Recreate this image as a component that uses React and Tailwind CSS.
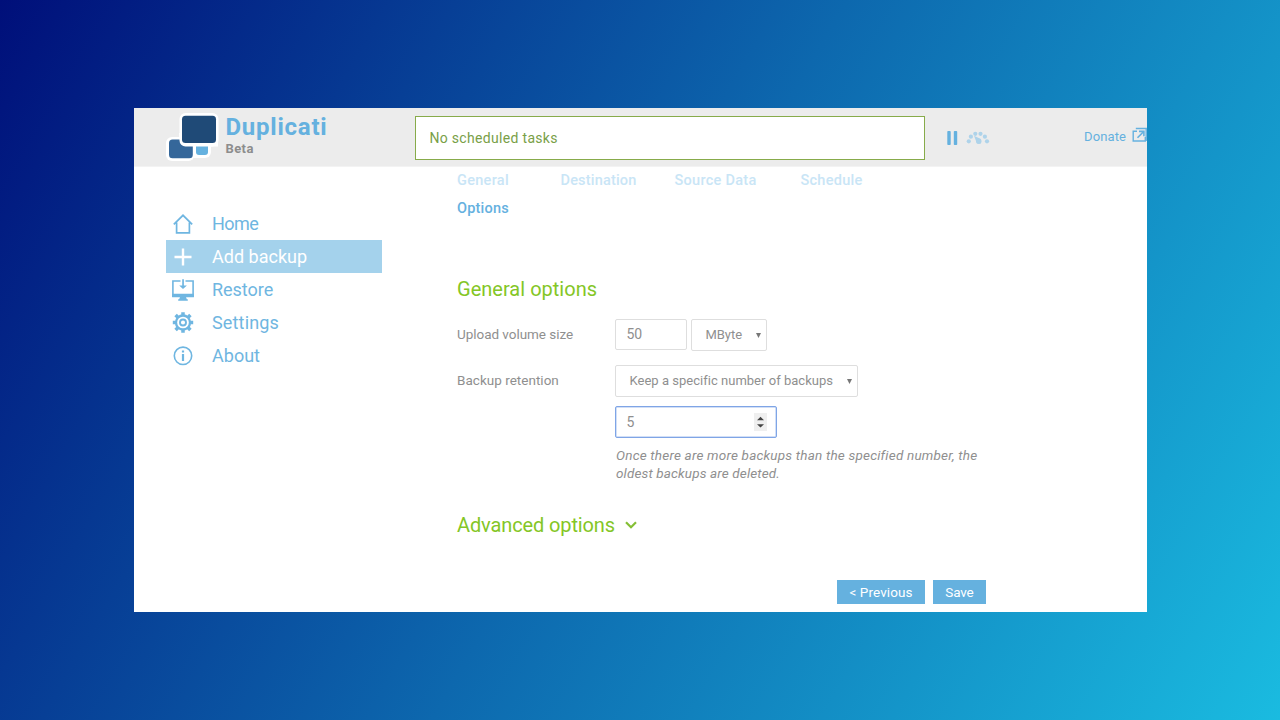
function Logo() {
  return (
    <svg className="h-[52px] w-[54px] shrink-0" viewBox="0 0 54 52">
      <rect x="22" y="24" width="23" height="25" rx="6" fill="#fff" />
      <rect x="0" y="28" width="28.5" height="24" rx="6" fill="#fff" />
      <rect x="13.5" y="4" width="39" height="33.5" rx="6" fill="#fff" />
      <rect x="30" y="34" width="12" height="12" rx="3" fill="#65b1df" />
      <path d="M22 28h8v21h-4z" fill="#fff" />
      <rect x="3" y="30.500" width="23.8" height="18.7" rx="3.5" fill="#35679a" />
      <path d="M13 24h39v13.5H19.5a6 6 0 0 1-6-6z" fill="#fff" />
      <rect x="16" y="6.800" width="34" height="27.200" rx="3.500" fill="#1f4a77" />
    </svg>
  );
}

function HomeIcon() {
  return (
    <svg className="size-[24px]" viewBox="0 0 24 24" fill="none" stroke="currentColor" strokeWidth="1.7">
      <path d="M2.800 12.300L12 3.300l9.200 9M5.600 10.500v10.300h12.800V10.500" />
    </svg>
  );
}

function PlusIcon() {
  return (
    <svg className="size-[24px]" viewBox="0 0 24 24" fill="none" stroke="currentColor" strokeWidth="2.400">
      <path d="M12 3.500v17M3.500 12h17" />
    </svg>
  );
}

function RestoreIcon() {
  return (
    <svg className="size-[24px]" viewBox="0 0 24 24">
      <path d="M9.500 3H1.900v15.500h20.200V3h-7.600" fill="none" stroke="currentColor" strokeWidth="1.600" />
      <path d="M1.100 15.800h21.800v3.300H1.100zM9 19h6l.8 2.200h1v1.600H7.200v-1.600h1z" fill="currentColor" />
      <path d="M11.200 1.200h1.700v6.200h3L12 11 8.200 7.400h3z" fill="currentColor" />
    </svg>
  );
}

function GearIcon() {
  return (
    <svg className="size-[24px]" viewBox="0 0 24 24" fill="none" stroke="currentColor">
      <circle cx="12" cy="11.500" r="7" strokeWidth="2.300" />
      <circle cx="12" cy="11.500" r="3" strokeWidth="1.900" />
      <path
        d="M12 1.300v3.400M12 18.300v3.400M1.800 11.500h3.400M18.800 11.500h3.400M4.600 4.100l2.500 2.500M16.900 16.400l2.500 2.500M4.600 18.900l2.500-2.500M16.900 6.600l2.500-2.500"
        strokeWidth="3.500"
      />
    </svg>
  );
}

function InfoIcon() {
  return (
    <svg className="size-[24px]" viewBox="0 0 24 24" fill="none" stroke="currentColor">
      <circle cx="12" cy="11.800" r="8.700" strokeWidth="1.600" />
      <path d="M12 10.100v7M12 6.600v2" strokeWidth="2.200" />
    </svg>
  );
}

function PauseIcon() {
  return (
    <svg className="h-[14px] w-[11px]" viewBox="0 0 11 14" fill="currentColor">
      <rect x="0.300" y="0" width="3.400" height="14" rx="0.800" />
      <rect x="6.800" y="0" width="3.400" height="14" rx="0.800" />
    </svg>
  );
}

function SpeedIcon() {
  return (
    <svg className="h-[14px] w-[24px]" viewBox="0 0 24 14" fill="currentColor">
      <circle cx="2.800" cy="10.300" r="2.100" />
      <circle cx="4.900" cy="5.700" r="2.100" />
      <circle cx="9.300" cy="2.800" r="2.100" />
      <circle cx="14.500" cy="2.800" r="2.100" />
      <circle cx="18.900" cy="5.700" r="2.100" />
      <circle cx="21" cy="10.300" r="2.100" />
      <path d="M8 4.800l6.800 3.200v4.500h-3.800z" />
      <circle cx="12.800" cy="10.300" r="2.700" />
    </svg>
  );
}

function ExternalIcon() {
  return (
    <svg className="h-[16px] w-[16px] shrink-0" viewBox="0 0 16 16" fill="none" stroke="currentColor" strokeWidth="1.400">
      <path d="M5 4.300H1.200v9.700h12.100V10M3.800 1.500h11.500M14.200 1v13" />
      <path d="M5.500 10.700l6-6M7 4.400h4.900v4.900" strokeWidth="1.600" />
    </svg>
  );
}

function Caret() {
  return (
    <svg className="h-[5px] w-[5px]" viewBox="0 0 5 5" fill="#777">
      <path d="M0 0h5L2.500 5z" />
    </svg>
  );
}

const nav = [
  { label: "Home", Icon: HomeIcon, tracking: "tracking-[-0.550px]" },
  { label: "Add backup", Icon: PlusIcon, tracking: "tracking-[0.020px]", active: true },
  { label: "Restore", Icon: RestoreIcon, tracking: "tracking-[-0.030px]" },
  { label: "Settings", Icon: GearIcon, tracking: "tracking-[0.160px]" },
  { label: "About", Icon: InfoIcon, tracking: "tracking-[0.020px]" },
];

export default function App() {
  return (
    <div className="flex h-[720px] w-[1280px] flex-col overflow-hidden bg-[linear-gradient(120deg,#000f7a_0%,#0d68ae_50%,#1abbe0_100%)] px-[134px] pt-[108px] font-['Roboto',sans-serif]">
      <div className="flex h-[504px] w-[1013px] shrink-0 flex-col overflow-hidden whitespace-nowrap bg-white">
        <header className="flex h-[59px] shrink-0 items-start border-b border-[#f3f3f3] bg-[#ececec]">
          <div className="flex w-[281.400px] pl-8 pt-px">
            <Logo />
            <div className="flex flex-col pl-[5.500px] pt-1">
              <span className="text-[24px] font-bold leading-[28px] tracking-[0.770px] text-[#65b1df]">Duplicati</span>
              <span className="text-[13px] font-bold leading-[16px] tracking-[0.400px] text-[#8d8d8d]">Beta</span>
            </div>
          </div>
          <div className="mt-2 flex h-[44px] w-[510px] items-center border border-[#87ab4a] bg-white pl-[13px] text-[14px] tracking-[0.320px] text-[#79a047]">
            No scheduled tasks
          </div>
          <div className="flex h-[59px] items-center pl-[21.500px] text-[#65b1df]">
            <PauseIcon />
            <div className="pl-2 text-[#aed3ea]"><SpeedIcon /></div>
          </div>
          <div className="ml-auto flex h-[57px] items-center gap-[6px] text-[#65b1df]">
            <span className="text-[13px] tracking-[0.100px]">Donate</span>
            <div className="-mt-[3px] w-[15px]"><ExternalIcon /></div>
          </div>
        </header>
        <div className="flex flex-1">
          <nav className="ml-8 mt-10 flex w-[216px] shrink-0 flex-col">
            {nav.map(({ label, Icon, tracking, active }) => (
              <a
                key={label}
                className={
                  "flex h-[33px] items-center gap-[17px] pl-[5px] text-[18px] " +
                  (active ? "bg-[#a4d2ec] text-white" : "text-[#6fb6e1]")
                }
              >
                <Icon />
                <span className={tracking}>{label}</span>
              </a>
            ))}
          </nav>
          <main className="ml-[75px] flex w-[529px] flex-col text-[13.500px] text-[#8f8f8f]">
            <div className="flex h-7 items-center text-[14.500px] font-medium text-[#c9e5f6]">
              <span className="w-[103.500px] tracking-[0.300px]">General</span>
              <span className="w-[114px] tracking-[0.190px]">Destination</span>
              <span className="w-[126px] tracking-[0.280px]">Source Data</span>
              <span className="tracking-[0.260px]">Schedule</span>
            </div>
            <div className="flex h-7 items-center text-[14.500px] font-medium tracking-[0.200px] text-[#65b1df]">Options</div>
            <h2 className="mt-[52px] flex h-7 items-center text-[20px] tracking-[0.020px] text-[#84c626]">General options</h2>
            <div className="mt-4 flex h-8 items-start">
              <div className="flex h-[30px] w-[158px] items-center tracking-[-0.040px]">Upload volume size</div>
              <div className="flex h-[31px] w-[72px] items-center rounded-[2px] border border-[#dedede] pl-[10.500px] text-[14px]">50</div>
              <div className="ml-1 flex h-8 w-[76px] items-center justify-between rounded-[2px] border border-[#dedede] pl-[13.500px] pr-[5px] text-[13px] tracking-[-0.050px]">
                MByte
                <Caret />
              </div>
            </div>
            <div className="mt-[14px] flex h-8 items-start">
              <span className="w-[158px] leading-[30px] tracking-[0.020px]">Backup retention</span>
              <div className="flex h-8 w-[243px] items-center justify-between rounded-[2px] border border-[#dedede] pl-[13.500px] pr-[5px] text-[13px] tracking-[0.020px]">
                Keep a specific number of backups
                <Caret />
              </div>
            </div>
            <div className="ml-[158px] mt-[9px] flex h-8 w-[162px] items-center justify-between rounded-[2px] border border-[#7fa5e6] pl-[10.500px] pr-[9px] text-[14px] shadow-[inset_0_0_0_0.500px_#a5c0ee]">
              5
              <svg className="h-[18px] w-[13px]" viewBox="0 0 13 18">
                <path d="M0 0h13v18H0z" fill="#efefef" />
                <path d="M3 7.200h7L6.500 3.800zM3 11.300h7l-3.500 3.200z" fill="#444" />
              </svg>
            </div>
            <div className="ml-[159px] mt-[9px] flex flex-col italic leading-[17.500px]">
              <span className="tracking-[0.200px]">Once there are more backups than the specified number, the</span>
              <span className="tracking-[0.140px]">oldest backups are deleted.</span>
            </div>
            <h2 className="mt-[29px] flex h-7 items-center gap-[10px] text-[20px] text-[#84c626]">
              <span className="tracking-[-0.120px]">Advanced options</span>
              <svg className="h-[8px] w-[12px]" viewBox="0 0 12 8" fill="none" stroke="#85bf35" strokeWidth="2.200">
                <path d="M1 1.200l5 5 5-5" />
              </svg>
            </h2>
            <div className="mt-[41px] flex h-6 justify-end gap-2 text-white">
              <button className="flex h-6 w-[88px] items-center justify-center bg-[#65b1df] tracking-[0.080px]">&lt; Previous</button>
              <button className="flex h-6 w-[53px] items-center justify-center bg-[#65b1df] tracking-[-0.150px]">Save</button>
            </div>
          </main>
        </div>
      </div>
    </div>
  );
}
